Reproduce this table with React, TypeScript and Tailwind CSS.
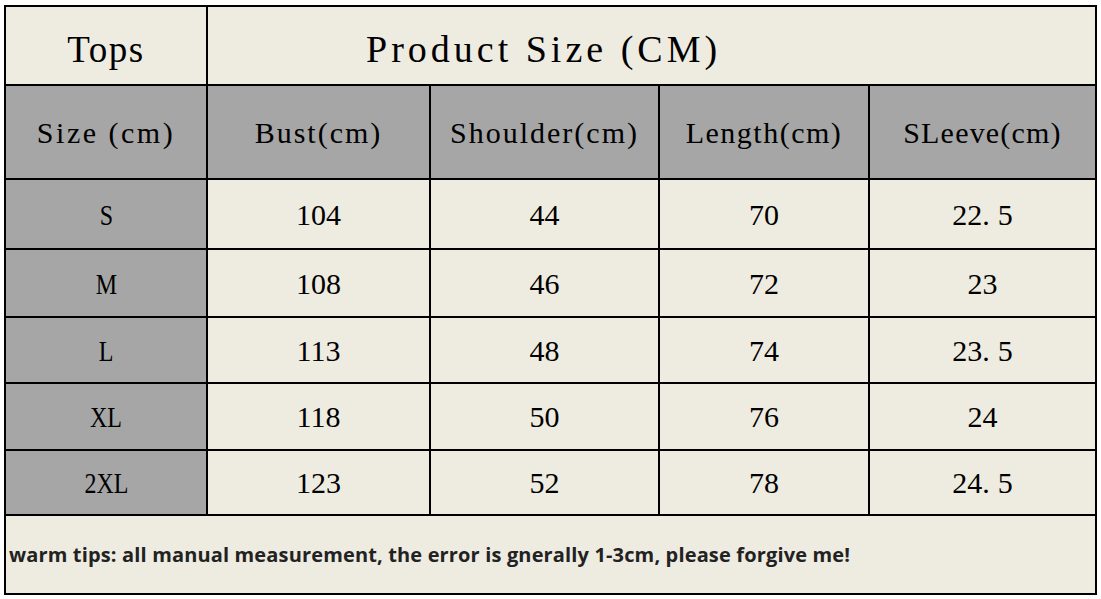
import React from "react";

const serif = { fontFamily: '"Liberation Serif", "Times New Roman", serif' };

const rows = [
  { s: "S", v: ["104", "44", "70", "22.5"], h: "h-[68px]" },
  { s: "M", v: ["108", "46", "72", "23"], h: "h-[66px]" },
  { s: "L", v: ["113", "48", "74", "23.5"], h: "h-[64px]" },
  { s: "XL", v: ["118", "50", "76", "24"], h: "h-[65px]" },
  { s: "2XL", v: ["123", "52", "78", "24.5"], h: "h-[63px]" },
];

function Num({ t }: { t: string }) {
  const parts = t.split(".");
  if (parts.length === 1) return <span>{t}</span>;
  return (
    <span>
      {parts[0]}
      <span className="mr-[8px]">.</span>
      {parts[1]}
    </span>
  );
}

export default function App() {
  const cols = "grid grid-cols-[200px_221px_227px_208px_225px] gap-x-[2px]";
  return (
    <div className="w-[1101px] h-[599px] bg-white pl-[4px] pt-[5px]">
      <div
        className="w-[1093px] h-[590px] border-2 border-black bg-black flex flex-col gap-y-[2px] text-black"
        style={serif}
      >
        {/* Title row */}
        <div className="grid grid-cols-[200px_887px] gap-x-[2px] h-[77px]">
          <div className="bg-[#eeebe1] flex items-center justify-center pt-[8px] text-[37px] tracking-[1.5px]">
            Tops
          </div>
          <div className="bg-[#eeebe1] flex items-center pl-[158px] pt-[8px] text-[38px] tracking-[4px]">
            Product Size (CM)
          </div>
        </div>
        {/* Header row */}
        <div className={`${cols} h-[92px]`}>
          {[
            { t: "Size (cm)", c: "tracking-[2.5px]" },
            { t: "Bust(cm)", c: "tracking-[2px]" },
            { t: "Shoulder(cm)", c: "tracking-[2px]" },
            { t: "Length(cm)", c: "tracking-[1.5px]" },
            { t: "SLeeve(cm)", c: "tracking-[1.2px]" },
          ].map((h, i) => (
            <div
              key={i}
              className={`bg-[#a6a6a6] flex items-center justify-center text-[30px] ${h.c}`}
            >
              {h.t}
            </div>
          ))}
        </div>
        {rows.map((r) => (
          <div key={r.s} className={`${cols} ${r.h}`}>
            <div className="bg-[#a6a6a6] flex items-center justify-center text-[30px]">
              <span className="inline-block scale-x-80">{r.s}</span>
            </div>
            {r.v.map((t, i) => (
              <div key={i} className="bg-[#eeebe1] flex items-center justify-center text-[30px]">
                <Num t={t} />
              </div>
            ))}
          </div>
        ))}
        {/* Tips row */}
        <div
          className="bg-[#eeebe1] flex-1 flex items-center pl-[3px] pt-[1px] text-[20px] tracking-[0.15px] font-bold text-[#222]"
          style={{ fontFamily: '"Open Sans", "Noto Sans", sans-serif' }}
        >
          warm tips: all manual measurement, the error is gnerally 1-3cm, please forgive me!
        </div>
      </div>
    </div>
  );
}
